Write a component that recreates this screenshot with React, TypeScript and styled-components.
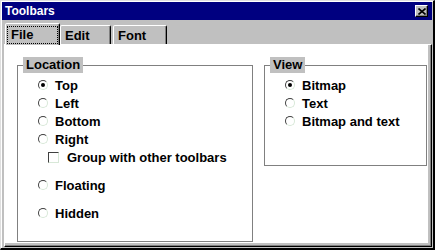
import React from 'react';
import styled, { createGlobalStyle } from 'styled-components';

const GlobalStyle = createGlobalStyle`
  html, body {
    margin: 0;
    padding: 0;
    background: #c0c0c0;
  }
  body {
    font-family: "Liberation Sans", Arial, sans-serif;
  }
`;

const StyledWindow = styled.div`
  box-sizing: border-box;
  width: 435px;
  height: 250px;
  display: flex;
  flex-direction: column;
  padding: 1px;
  background: #c0c0c0;
  border-style: solid;
  border-width: 1px 2px 2px 1px;
  border-color: #dfdfdf #000 #000 #dfdfdf;
  box-shadow: inset 1px 1px 0 #fff;
`;

const StyledTitleBar = styled.div`
  flex-shrink: 0;
  height: 18px;
  display: flex;
  align-items: center;
  justify-content: space-between;
  padding: 0 4px 0 3px;
  background: #000080;
`;

const StyledTitle = styled.span`
  color: #fff;
  font-size: 12px;
  font-weight: bold;
  line-height: 18px;
`;

const StyledCloseButton = styled.button`
  box-sizing: border-box;
  width: 13px;
  height: 12px;
  padding: 0;
  display: flex;
  align-items: center;
  justify-content: center;
  background: #c0c0c0;
  border: 1px solid;
  border-color: #fff #000 #000 #fff;
  box-shadow: inset -1px -1px 0 #808080;
`;

const StyledTabRow = styled.div`
  flex-shrink: 0;
  height: 24px;
  box-sizing: border-box;
  display: flex;
  align-items: flex-end;
  padding: 3px 0 0 3px;
`;

const StyledTab = styled.div<{ $width: number; $active?: boolean; $gap?: number }>`
  box-sizing: border-box;
  width: ${(p) => p.$width}px;
  height: ${(p) => (p.$active ? 22 : 19)}px;
  margin-left: ${(p) => p.$gap ?? 0}px;
  margin-bottom: ${(p) => (p.$active ? -1 : 0)}px;
  position: relative;
  z-index: ${(p) => (p.$active ? 1 : 0)};
  padding: ${(p) => (p.$active ? '2px 1px 0 1px' : '2px 0 0 4px')};
  background: #c0c0c0;
  border-style: solid;
  border-width: 1px 1px 0 1px;
  border-color: #fff #000 transparent #fff;
  border-radius: 2px 2px 0 0;
  box-shadow: inset -1px 0 0 #808080;
  font-size: 13px;
  font-weight: bold;
  line-height: 15px;
  color: #000;
`;

const StyledFocusBox = styled.div`
  box-sizing: border-box;
  height: 18px;
  padding: 1px 0 0 3px;
  border: 1px dotted #000;
  line-height: 14px;
`;

const StyledPanel = styled.div`
  flex: 1;
  display: flex;
  margin-left: 2px;
  padding: 0 3px 3px 0;
  background: #c0c0c0;
  border-style: solid;
  border-width: 1px;
  border-color: #fff #000 #000 #fff;
  box-shadow: inset -1px -1px 0 #808080;
`;

const StyledPage = styled.div`
  flex: 1;
  display: flex;
  align-items: flex-start;
  gap: 11px;
  padding: 12px 0 1px 12px;
  background: #fff;
`;

const StyledGroup = styled.fieldset<{ $width: number; $height?: number }>`
  box-sizing: border-box;
  margin: 0;
  padding: 0;
  min-inline-size: auto;
  width: ${(p) => p.$width}px;
  height: ${(p) => (p.$height ? `${p.$height}px` : 'auto')};
  align-self: ${(p) => (p.$height ? 'flex-start' : 'stretch')};
  border: 1px solid #808080;
`;

const StyledLegend = styled.legend`
  margin-left: 5px;
  padding: 0 3px;
  background: #c0c0c0;
  font-size: 13px;
  font-weight: bold;
  line-height: 16px;
  color: #000;
`;

const StyledList = styled.div`
  display: flex;
  flex-direction: column;
  padding: 3px 0 0 20px;
`;

const StyledOption = styled.div<{ $indent?: number; $space?: number }>`
  height: 18px;
  display: flex;
  align-items: center;
  margin-left: ${(p) => p.$indent ?? 0}px;
  margin-top: ${(p) => p.$space ?? 0}px;
  font-size: 13px;
  font-weight: bold;
  color: #000;
  white-space: nowrap;
`;

const StyledRadio = styled.span<{ $checked?: boolean }>`
  box-sizing: border-box;
  flex-shrink: 0;
  width: 10px;
  height: 10px;
  margin-right: 7px;
  display: flex;
  align-items: center;
  justify-content: center;
  border-radius: 50%;
  border: 1px solid;
  border-color: #404040 #d8e8d8 #d8e8d8 #404040;
  background: #fff;

  &::after {
    content: '';
    display: ${(p) => (p.$checked ? 'block' : 'none')};
    width: 4px;
    height: 4px;
    border-radius: 50%;
    background: #000;
  }
`;

const StyledCheckbox = styled.span`
  box-sizing: border-box;
  flex-shrink: 0;
  width: 11px;
  height: 11px;
  margin-right: 8px;
  border: 1px solid;
  border-color: #404040 #d8e8d8 #d8e8d8 #404040;
  background: #fff;
`;

const locationOptions = [
  { label: 'Top', checked: true },
  { label: 'Left' },
  { label: 'Bottom' },
  { label: 'Right' },
];

const viewOptions = [{ label: 'Bitmap', checked: true }, { label: 'Text' }, { label: 'Bitmap and text' }];

const App: React.FC = () => {
  return (
    <>
      <GlobalStyle />
      <StyledWindow>
        <StyledTitleBar>
          <StyledTitle>Toolbars</StyledTitle>
          <StyledCloseButton aria-label="Close">
            <svg width="8" height="7" viewBox="0 0 8 7">
              <path d="M0.5 0.5 L7.5 6.5 M7.5 0.5 L0.5 6.5" stroke="#000" strokeWidth="1.6" fill="none" />
            </svg>
          </StyledCloseButton>
        </StyledTitleBar>
        <StyledTabRow>
          <StyledTab $width={55} $active>
            <StyledFocusBox>File</StyledFocusBox>
          </StyledTab>
          <StyledTab $width={51}>Edit</StyledTab>
          <StyledTab $width={54} $gap={2}>
            Font
          </StyledTab>
        </StyledTabRow>
        <StyledPanel>
          <StyledPage>
            <StyledGroup $width={236}>
              <StyledLegend>Location</StyledLegend>
              <StyledList>
                {locationOptions.map((o) => (
                  <StyledOption key={o.label}>
                    <StyledRadio $checked={o.checked} />
                    {o.label}
                  </StyledOption>
                ))}
                <StyledOption $indent={10}>
                  <StyledCheckbox />
                  Group with other toolbars
                </StyledOption>
                <StyledOption $space={10}>
                  <StyledRadio />
                  Floating
                </StyledOption>
                <StyledOption $space={10}>
                  <StyledRadio />
                  Hidden
                </StyledOption>
              </StyledList>
            </StyledGroup>
            <StyledGroup $width={163} $height={109}>
              <StyledLegend>View</StyledLegend>
              <StyledList>
                {viewOptions.map((o) => (
                  <StyledOption key={o.label}>
                    <StyledRadio $checked={o.checked} />
                    {o.label}
                  </StyledOption>
                ))}
              </StyledList>
            </StyledGroup>
          </StyledPage>
        </StyledPanel>
      </StyledWindow>
    </>
  );
};

export default App;
